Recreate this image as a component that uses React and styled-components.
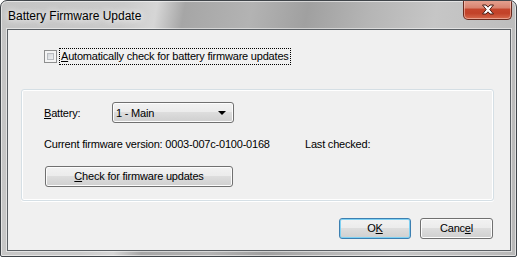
import React from "react";
import styled, { createGlobalStyle } from "styled-components";

const Global = createGlobalStyle`
  html, body { margin: 0; padding: 0; background: #ffffff; }
  body { font-family: "Liberation Sans", Arial, sans-serif; }
`;

const Window = styled.div`
  box-sizing: border-box;
  width: 517px;
  height: 257px;
  border: 1px solid #3f4449;
  border-radius: 7px 7px 2px 2px;
  background: linear-gradient(100deg, #c4c4c4 0%, #cacaca 22%, #d6d6d6 28%, #a6a6a6 33%, #b3b3b3 45%, #a0a0a0 55%, #b5b5b5 66%, #c6c6c6 78%, #bfbfbf 90%, #b8b8b8 100%);
  box-shadow: inset 0 0 0 1px rgba(255, 255, 255, 0.55);
  display: flex;
  flex-direction: column;
  padding: 0 5px 5px 6px;
  overflow: hidden;
`;

const TitleBar = styled.div`
  height: 28px;
  display: flex;
  align-items: flex-start;
  justify-content: space-between;
  margin-left: -6px;
  margin-right: -5px;
`;

const Title = styled.div`
  font-family: "Liberation Sans", Arial, sans-serif;
  font-size: 12px;
  color: #000;
  margin: 8px 0 0 7px;
  text-shadow: 0 0 6px rgba(255, 255, 255, 0.95), 0 0 10px rgba(255, 255, 255, 0.8);
`;

const CloseButton = styled.div`
  box-sizing: border-box;
  width: 49px;
  height: 20px;
  margin: -1px 4px 0 0;
  border: 1px solid #6b2a1e;
  border-top: none;
  border-radius: 0 0 5px 5px;
  background: linear-gradient(180deg, #e6a493 0%, #d98470 40%, #c5452c 50%, #c24229 70%, #d66a4d 100%);
  box-shadow: inset 0 0 0 1px rgba(255, 220, 210, 0.5);
  display: flex;
  align-items: center;
  justify-content: center;
`;

const Client = styled.div`
  flex: 1;
  border: 1px solid #5a5f64;
  background: #f0f0f0;
  display: flex;
  flex-direction: column;
  padding: 18px 0 0 0;
  box-shadow: 0 0 0 1px rgba(255, 255, 255, 0.5);
  font-family: "Liberation Sans", Arial, sans-serif;
  font-size: 11px;
  letter-spacing: -0.2px;
  color: #000;
`;

const CheckRow = styled.label`
  display: flex;
  align-items: center;
  height: 16px;
  margin-left: 36px;
`;

const CheckBox = styled.span`
  box-sizing: border-box;
  width: 13px;
  height: 13px;
  border: 1px solid #8e8f8f;
  background: #f4f4f4;
  padding: 2px;
  display: flex;
  & > span {
    flex: 1;
    background: linear-gradient(135deg, #d3d6da 0%, #e6e8ea 60%, #f2f2f2 100%);
    border: 1px solid #b8bcc1;
  }
`;

const FocusLabel = styled.span`
  margin-left: 2px;
  padding: 1px 1px 1px 1px;
  border: 1px dotted #000;
  line-height: 13px;
`;

const Key = styled.span`
  text-decoration: underline;
`;

const GroupBox = styled.div`
  box-sizing: border-box;
  margin: 25px 0 0 13px;
  width: 473px;
  height: 112px;
  border: 1px solid #d5dfe5;
  border-radius: 3px;
  box-shadow: inset 0 0 0 1px #ffffff, 0 1px 0 #ffffff;
  padding: 12px 0 0 22px;
  display: flex;
  flex-direction: column;
`;

const FieldRow = styled.div`
  display: flex;
  align-items: center;
  height: 21px;
`;

const FieldLabel = styled.span`
  width: 68px;
`;

const Combo = styled.div`
  box-sizing: border-box;
  width: 122px;
  height: 21px;
  border: 1px solid #707070;
  border-radius: 3px;
  background: linear-gradient(180deg, #f2f2f2 0%, #ebebeb 50%, #dddddd 50%, #cfcfcf 100%);
  box-shadow: inset 0 0 0 1px #fcfcfc;
  display: flex;
  align-items: center;
  justify-content: space-between;
  padding: 0 7px 0 3px;
`;

const Arrow = styled.span`
  width: 0;
  height: 0;
  border-left: 4px solid transparent;
  border-right: 4px solid transparent;
  border-top: 4px solid #000;
  margin-top: 1px;
`;

const InfoRow = styled.div`
  display: flex;
  margin-top: 15px;
  line-height: 13px;
`;

const InfoText = styled.span`
  width: 261px;
`;

const Button = styled.div`
  box-sizing: border-box;
  width: ${(p) => p.$w}px;
  height: 21px;
  border: 1px solid ${(p) => (p.$default ? "#3c7fb1" : "#707070")};
  border-radius: 3px;
  background: linear-gradient(180deg, #f2f2f2 0%, #ebebeb 50%, #dddddd 50%, #cfcfcf 100%);
  box-shadow: inset 0 0 0 1px ${(p) => (p.$default ? "#7fd1f3" : "#fcfcfc")};
  display: flex;
  align-items: center;
  justify-content: center;
  line-height: 13px;
`;

const GroupButton = styled(Button)`
  margin-top: 15px;
  margin-left: 1px;
`;

const ButtonRow = styled.div`
  display: flex;
  justify-content: flex-end;
  gap: 9px;
  margin: 17px 17px 0 0;
`;

export default function App() {
  return (
    <>
      <Global />
      <Window>
        <TitleBar>
          <Title>Battery Firmware Update</Title>
          <CloseButton>
            <svg width="14" height="11" viewBox="0 0 14 11">
              <path
                d="M1.5 1 L5 1 L7 3.2 L9 1 L12.5 1 L8.8 5.5 L12.5 10 L9 10 L7 7.8 L5 10 L1.5 10 L5.2 5.5 Z"
                fill="#ffffff"
                stroke="#4a1e16"
                strokeWidth="1"
                strokeLinejoin="round"
              />
            </svg>
          </CloseButton>
        </TitleBar>
        <Client>
          <CheckRow>
            <CheckBox><span /></CheckBox>
            <FocusLabel><Key>A</Key>utomatically check for battery firmware updates</FocusLabel>
          </CheckRow>
          <GroupBox>
            <FieldRow>
              <FieldLabel><Key>B</Key>attery:</FieldLabel>
              <Combo>
                <span>1 - Main</span>
                <Arrow />
              </Combo>
            </FieldRow>
            <InfoRow>
              <InfoText>Current firmware version: 0003-007c-0100-0168</InfoText>
              <span>Last checked:</span>
            </InfoRow>
            <GroupButton $w={188}><span><Key>C</Key>heck for firmware updates</span></GroupButton>
          </GroupBox>
          <ButtonRow>
            <Button $w={72} $default><span>O<Key>K</Key></span></Button>
            <Button $w={73}><span>Canc<Key>e</Key>l</span></Button>
          </ButtonRow>
        </Client>
      </Window>
    </>
  );
}
